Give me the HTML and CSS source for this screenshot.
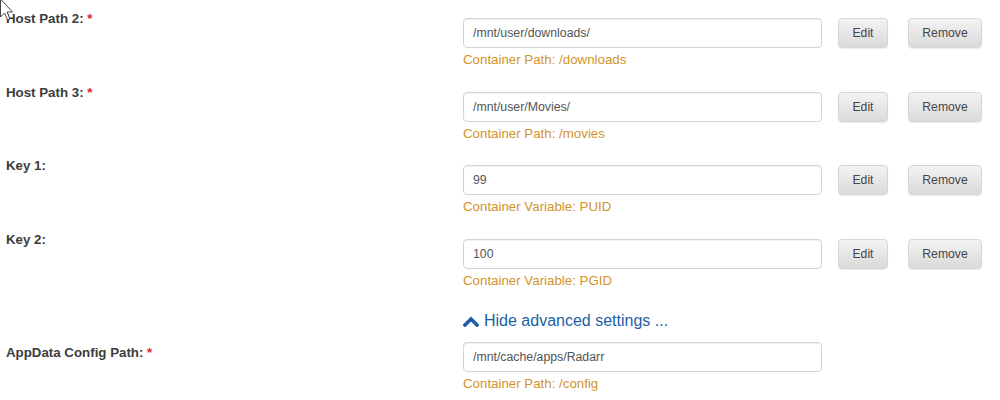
FILE: index.html
```html
<!doctype html>
<html lang="en">
<head>
    <meta charset="UTF-8">
    <title>Docker Container Settings</title>
    <link rel="stylesheet" href="styles.css">
</head>
<body>
<div class="settings">
    <div class="row">
        <div class="label">Host Path 2: <span class="req">*</span></div>
        <div class="field">
            <div class="line">
                <input class="text" type="text" value="/mnt/user/downloads/">
                <button class="btn edit">Edit</button>
                <button class="btn remove">Remove</button>
            </div>
            <div class="help">Container Path: /downloads</div>
        </div>
    </div>
    <div class="row">
        <div class="label">Host Path 3: <span class="req">*</span></div>
        <div class="field">
            <div class="line">
                <input class="text" type="text" value="/mnt/user/Movies/">
                <button class="btn edit">Edit</button>
                <button class="btn remove">Remove</button>
            </div>
            <div class="help">Container Path: /movies</div>
        </div>
    </div>
    <div class="row">
        <div class="label">Key 1:</div>
        <div class="field">
            <div class="line">
                <input class="text" type="text" value="99">
                <button class="btn edit">Edit</button>
                <button class="btn remove">Remove</button>
            </div>
            <div class="help">Container Variable: PUID</div>
        </div>
    </div>
    <div class="row">
        <div class="label">Key 2:</div>
        <div class="field">
            <div class="line">
                <input class="text" type="text" value="100">
                <button class="btn edit">Edit</button>
                <button class="btn remove">Remove</button>
            </div>
            <div class="help">Container Variable: PGID</div>
        </div>
    </div>

    <div class="toggle">
        <svg class="chevron" viewBox="0 0 16 12" width="16" height="12">
            <polyline points="2,10 8,4 14,10"></polyline>
        </svg>
        <span>Hide advanced settings ...</span>
    </div>

    <div class="row advanced">
        <div class="label">AppData Config Path: <span class="req">*</span></div>
        <div class="field">
            <div class="line">
                <input class="text" type="text" value="/mnt/cache/apps/Radarr">
            </div>
            <div class="help">Container Path: /config</div>
        </div>
    </div>
</div>

<svg class="cursor" viewBox="0 0 14 22" width="14" height="22">
    <path d="M0.5 -1 L0.5 17 L4.5 13 L7.5 20 L10 19 L7 12 L12.5 12 Z"></path>
</svg>
</body>
</html>
```

FILE: styles.css
```css
* {
    margin: 0;
    padding: 0;
    box-sizing: border-box;
}

body {
    font-family: "Liberation Sans", Arial, sans-serif;
    background: #fff;
    color: #444;
    width: 1000px;
    height: 400px;
    overflow: hidden;
    position: relative;
}

.settings {
    padding: 11px 0 0 6px;
}

.row {
    display: grid;
    grid-template-columns: 457px 1fr;
    padding-bottom: 15.5px;
}

.label {
    font-size: 13.3px;
    font-weight: bold;
    line-height: 16px;
    color: #3c3c3c;
}

.req {
    color: #e51c1c;
}

.field {
    padding-top: 7px;
}

.line {
    display: flex;
    align-items: center;
}

.text {
    width: 359px;
    height: 30px;
    border: 1px solid #d4d4d4;
    border-radius: 4px;
    box-shadow: inset 0 1px 1px rgba(0, 0, 0, 0.06);
    padding: 0 9px;
    font-family: "Liberation Sans", Arial, sans-serif;
    font-size: 12.3px;
    color: #555;
    background: #fff;
    outline: none;
}

.btn {
    height: 30px;
    font-family: "Liberation Sans", Arial, sans-serif;
    font-size: 12.2px;
    color: #444;
    border: 1px solid #d6d6d6;
    border-radius: 4px;
    background: linear-gradient(#f3f3f3, #dadada);
    box-shadow: 0 1px 1px rgba(0, 0, 0, 0.08);
}

.edit {
    width: 50px;
    margin-left: 16px;
}

.remove {
    width: 74px;
    margin-left: 20px;
}

.help {
    margin-top: 3px;
    font-size: 13.3px;
    line-height: 18px;
    color: #d39329;
}

.toggle {
    display: flex;
    align-items: center;
    gap: 5px;
    margin: 5.5px 0 11.5px 457px;
    font-size: 16px;
    line-height: 20px;
    color: #1c5fa5;
}

.chevron polyline {
    fill: none;
    stroke: #1c5fa5;
    stroke-width: 3.6;
    stroke-linecap: square;
}

.row.advanced .label {
    padding-top: 2.5px;
}

.row.advanced .field {
    padding-top: 0;
}

.cursor {
    position: absolute;
    left: 0;
    top: 0;
}

.cursor path {
    fill: #fff;
    stroke: #333;
    stroke-width: 0.9;
}
```
